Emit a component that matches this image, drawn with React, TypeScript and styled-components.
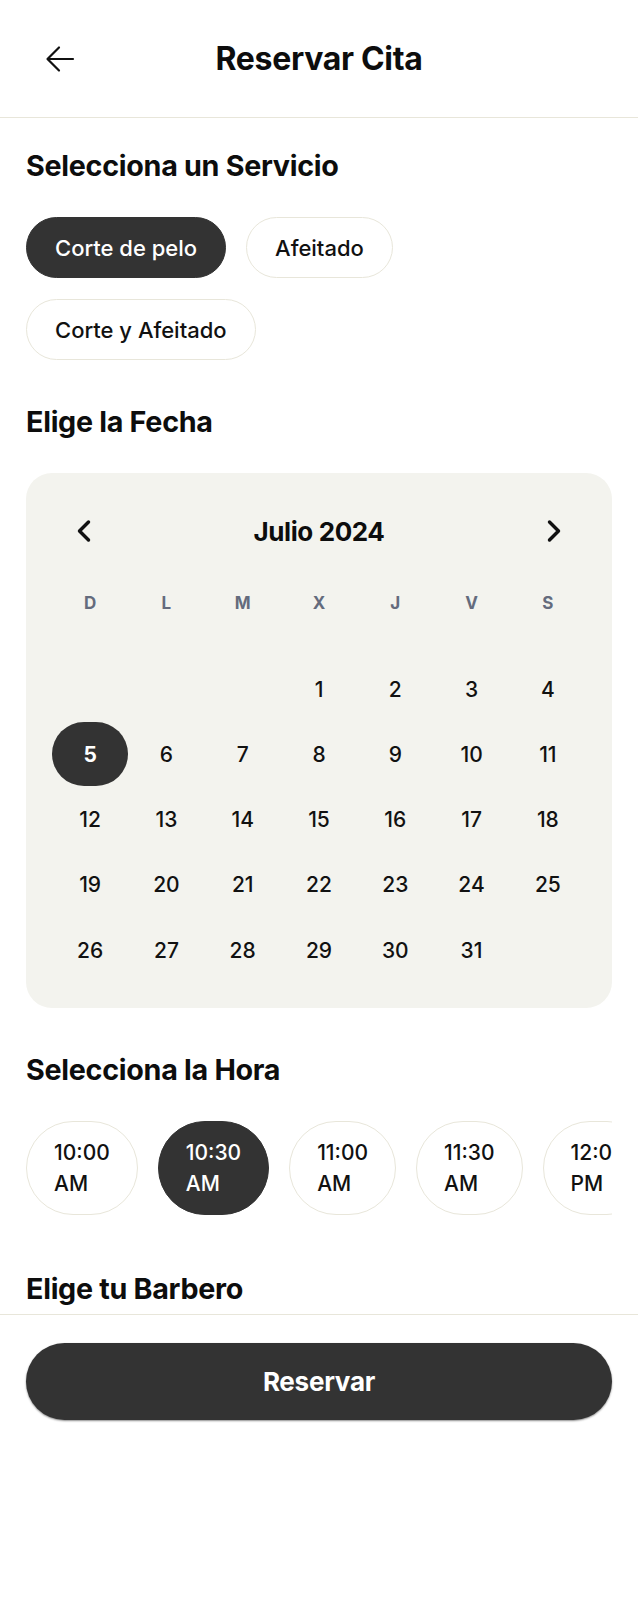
import React from "react";
import styled, { createGlobalStyle } from "styled-components";
import { ChevronLeft, ChevronRight } from "lucide-react";

const GlobalStyle = createGlobalStyle`
  html, body { margin: 0; padding: 0; background: #ffffff; }
  body {
    font-family: Inter, "Noto Sans", "Liberation Sans", Arial, sans-serif;
    color: #111111;
    -webkit-font-smoothing: antialiased;
  }
  * { box-sizing: border-box; }
  button { font-family: inherit; }
`;

const Page = styled.div`
  width: 100%;
  min-height: 1600px;
  background: #ffffff;
  display: flex;
  flex-direction: column;
`;

const Header = styled.header`
  height: 118px;
  flex-shrink: 0;
  border-bottom: 1px solid #e8e6da;
  display: grid;
  grid-template-columns: 1fr auto 1fr;
  align-items: center;
  padding: 0 45px;
`;

const BackButton = styled.button`
  width: 30px;
  height: 30px;
  padding: 0;
  border: none;
  background: none;
  display: flex;
  align-items: center;
  justify-content: center;
  color: #111;
  cursor: pointer;
`;

const Title = styled.h1`
  margin: 0;
  font-size: 32px;
  line-height: 36px;
  font-weight: 700;
  letter-spacing: -0.01em;
  color: #0d0d0d;
`;

const Main = styled.main`
  height: 1196px;
  overflow: hidden;
  padding: 30px 26px 0;
`;

const Section = styled.section`
  margin-bottom: 44px;
`;

const Heading = styled.h2`
  margin: 0 0 33px;
  font-size: 28.7px;
  line-height: 36px;
  font-weight: 700;
  letter-spacing: -0.01em;
  color: #0d0d0d;
`;

const PillRow = styled.div`
  display: flex;
  flex-wrap: wrap;
  gap: 21px 20px;
`;

const Pill = styled.button<{ $active?: boolean }>`
  height: 61px;
  padding: 0 28px;
  border-radius: 999px;
  border: 1px solid ${(p) => (p.$active ? "#333333" : "#e8e6da")};
  background: ${(p) => (p.$active ? "#333333" : "#ffffff")};
  color: ${(p) => (p.$active ? "#ffffff" : "#111111")};
  font-size: 22px;
  font-weight: 500;
  cursor: pointer;
`;

const Card = styled.div`
  background: #f3f3ee;
  border-radius: 26px;
  padding: 26px;
`;

const MonthBar = styled.div`
  height: 64px;
  display: flex;
  align-items: center;
  justify-content: space-between;
`;

const NavButton = styled.button`
  width: 64px;
  height: 64px;
  border: none;
  background: none;
  padding: 0;
  display: flex;
  align-items: center;
  justify-content: center;
  color: #111;
  cursor: pointer;
`;

const MonthLabel = styled.div`
  font-size: 26px;
  font-weight: 700;
  letter-spacing: -0.015em;
  color: #0d0d0d;
`;

const WeekRow = styled.div`
  margin-top: 20px;
  height: 40px;
  display: grid;
  grid-template-columns: repeat(7, 1fr);
  align-items: center;
`;

const WeekDay = styled.div`
  text-align: center;
  font-size: 17px;
  font-weight: 700;
  color: #646b7d;
`;

const DaysGrid = styled.div`
  margin-top: 34px;
  display: grid;
  grid-template-columns: repeat(7, 1fr);
  grid-auto-rows: 64px;
  row-gap: 1.25px;
`;

const Day = styled.div<{ $selected?: boolean }>`
  display: flex;
  align-items: center;
  justify-content: center;
  border-radius: 32px;
  font-size: 21px;
  font-weight: ${(p) => (p.$selected ? 700 : 500)};
  background: ${(p) => (p.$selected ? "#333333" : "transparent")};
  color: ${(p) => (p.$selected ? "#ffffff" : "#111111")};
`;

const TimeStrip = styled.div`
  display: flex;
  gap: 20px;
  overflow: hidden;
  padding-bottom: 12px;
`;

const TimeChip = styled.button<{ $active?: boolean }>`
  flex-shrink: 0;
  width: min-content;
  padding: 15px 27px;
  border-radius: 999px;
  border: 1px solid ${(p) => (p.$active ? "#333333" : "#e8e6da")};
  background: ${(p) => (p.$active ? "#333333" : "#ffffff")};
  color: ${(p) => (p.$active ? "#ffffff" : "#111111")};
  font-size: 21px;
  line-height: 31px;
  font-weight: 500;
  text-align: left;
  cursor: pointer;
`;

const BarberList = styled.div`
  display: flex;
  gap: 20px;
`;

const Barber = styled.div`
  width: 110px;
  height: 110px;
  border-radius: 50%;
  background: #f3f3ee;
`;

const Footer = styled.footer`
  border-top: 1px solid #e8e6da;
  padding: 28px 26px;
`;

const BookButton = styled.button`
  width: 100%;
  height: 77px;
  border-radius: 999px;
  border: none;
  background: #333333;
  color: #ffffff;
  font-size: 26px;
  font-weight: 700;
  letter-spacing: -0.01em;
  box-shadow: 0 1px 2px rgba(0, 0, 0, 0.45);
  cursor: pointer;
`;

const services = ["Corte de pelo", "Afeitado", "Corte y Afeitado"];
const weekDays = ["D", "L", "M", "X", "J", "V", "S"];
const times = [
  "10:00 AM",
  "10:30 AM",
  "11:00 AM",
  "11:30 AM",
  "12:00 PM",
  "12:30 PM",
  "1:00 PM",
];

export default function App() {
  const cells: (number | null)[] = [null, null, null];
  for (let d = 1; d <= 31; d++) cells.push(d);

  return (
    <Page>
      <GlobalStyle />
      <Header>
        <BackButton aria-label="Volver">
          <svg width="30" height="28" viewBox="0 0 30 28" fill="none">
            <path
              d="M28 14H3M14 2.5 2.5 14 14 25.5"
              stroke="currentColor"
              strokeWidth="2.2"
              strokeLinecap="round"
              strokeLinejoin="round"
            />
          </svg>
        </BackButton>
        <Title>Reservar Cita</Title>
        <div />
      </Header>
      <Main>
        <Section>
          <Heading>Selecciona un Servicio</Heading>
          <PillRow>
            {services.map((s, i) => (
              <Pill key={s} $active={i === 0}>
                {s}
              </Pill>
            ))}
          </PillRow>
        </Section>
        <Section>
          <Heading>Elige la Fecha</Heading>
          <Card>
            <MonthBar>
              <NavButton aria-label="Mes anterior">
                <ChevronLeft size={36} strokeWidth={2.3} />
              </NavButton>
              <MonthLabel>Julio 2024</MonthLabel>
              <NavButton aria-label="Mes siguiente">
                <ChevronRight size={36} strokeWidth={2.3} />
              </NavButton>
            </MonthBar>
            <WeekRow>
              {weekDays.map((d) => (
                <WeekDay key={d}>{d}</WeekDay>
              ))}
            </WeekRow>
            <DaysGrid>
              {cells.map((d, i) => (
                <Day key={i} $selected={d === 5}>
                  {d ?? ""}
                </Day>
              ))}
            </DaysGrid>
          </Card>
        </Section>
        <Section>
          <Heading>Selecciona la Hora</Heading>
          <TimeStrip>
            {times.map((t, i) => (
              <TimeChip key={t} $active={i === 1}>
                {t}
              </TimeChip>
            ))}
          </TimeStrip>
        </Section>
        <Section>
          <Heading>Elige tu Barbero</Heading>
          <BarberList>
            <Barber />
            <Barber />
            <Barber />
          </BarberList>
        </Section>
      </Main>
      <Footer>
        <BookButton>Reservar</BookButton>
      </Footer>
    </Page>
  );
}
